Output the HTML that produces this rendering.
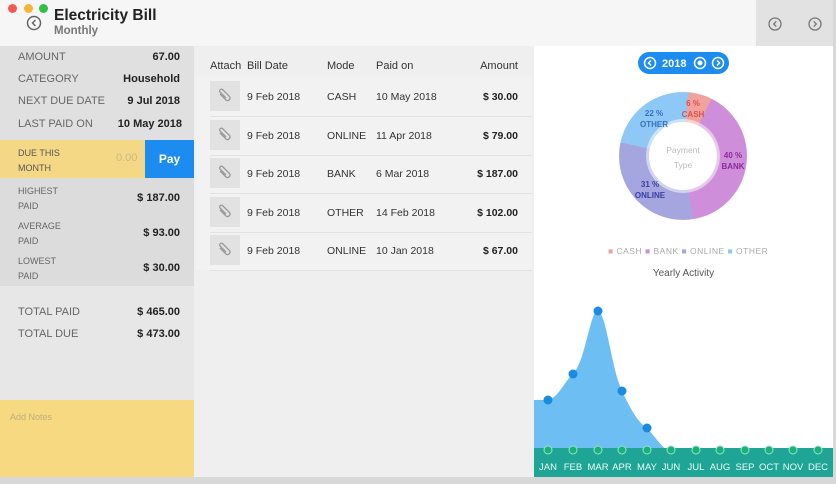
<!DOCTYPE html>
<html><head><meta charset="utf-8"><style>
*{margin:0;padding:0;box-sizing:border-box}
body{width:836px;height:484px;overflow:hidden;background:#d8d8d8;font-family:"Liberation Sans",sans-serif;position:relative}
.abs{position:absolute}
.lbl{font-size:11px;color:#666}
.val{font-size:11px;font-weight:bold;color:#222;text-align:right}
.th{font-size:11px;color:#333}
.td{font-size:10.5px;color:#333}
.clip{width:30px;height:30px;background:#e2e2e2}
</style></head><body>
<div class="abs" style="left:0;top:0;width:833px;height:46px;background:#f6f6f6"></div>
<div class="abs" style="left:756px;top:0;width:77px;height:46px;background:#e2e2e2"></div>
<div class="abs" style="left:8px;top:4px;width:9px;height:9px;border-radius:50%;background:#f25a50"></div>
<div class="abs" style="left:24px;top:4px;width:9px;height:9px;border-radius:50%;background:#f6b634"></div>
<div class="abs" style="left:39px;top:4px;width:9px;height:9px;border-radius:50%;background:#2fc144"></div>
<svg class="abs" style="left:26px;top:15px" width="16" height="16"><circle cx="8" cy="8" r="6.5" fill="none" stroke="#666" stroke-width="1.5"/><path d="M9.5 5 L6.5 8 L9.5 11" fill="none" stroke="#666" stroke-width="1.5"/></svg>
<div class="abs" style="left:54px;top:7px;font-size:15.5px;font-weight:bold;color:#222">Electricity Bill</div>
<div class="abs" style="left:54px;top:25px;font-size:11.5px;font-weight:bold;color:#777">Monthly</div>
<svg class="abs" style="left:767px;top:16px" width="16" height="16"><circle cx="8" cy="8" r="6" fill="none" stroke="#777" stroke-width="1.3"/><path d="M9.3 5.3 L6.7 8 L9.3 10.7" fill="none" stroke="#777" stroke-width="1.3"/></svg>
<svg class="abs" style="left:807px;top:16px" width="16" height="16"><circle cx="8" cy="8" r="6" fill="none" stroke="#777" stroke-width="1.3"/><path d="M6.7 5.3 L9.3 8 L6.7 10.7" fill="none" stroke="#777" stroke-width="1.3"/></svg>

<div class="abs" style="left:0;top:46px;width:194px;height:94px;background:#e0e0e0"></div>
<div class="abs lbl" style="left:18px;top:51px">AMOUNT</div><div class="abs val" style="left:90px;top:51px;width:90px">67.00</div>
<div class="abs lbl" style="left:18px;top:73px">CATEGORY</div><div class="abs val" style="left:90px;top:73px;width:90px">Household</div>
<div class="abs lbl" style="left:18px;top:95px">NEXT DUE DATE</div><div class="abs val" style="left:90px;top:95px;width:90px">9 Jul 2018</div>
<div class="abs lbl" style="left:18px;top:118px">LAST PAID ON</div><div class="abs val" style="left:90px;top:118px;width:92px">10 May 2018</div>
<div class="abs" style="left:0;top:140px;width:145px;height:38px;background:#f5d886"></div>
<div class="abs" style="left:18px;top:146px;font-size:9px;color:#555;line-height:15px">DUE THIS<br>MONTH</div>
<div class="abs" style="left:116px;top:152px;font-size:11px;color:#c8b88a">0.00</div>
<div class="abs" style="left:145px;top:140px;width:49px;height:38px;background:#1d8cf0;color:#fff;font-weight:bold;font-size:12px;text-align:center;line-height:38px">Pay</div>
<div class="abs" style="left:0;top:178px;width:194px;height:108px;background:#dcdcdc"></div>
<div class="abs" style="left:18px;top:184px;font-size:9px;color:#666;line-height:15px">HIGHEST<br>PAID</div><div class="abs val" style="left:90px;top:192px;width:90px">$ 187.00</div>
<div class="abs" style="left:18px;top:219px;font-size:9px;color:#666;line-height:15px">AVERAGE<br>PAID</div><div class="abs val" style="left:90px;top:227px;width:90px">$ 93.00</div>
<div class="abs" style="left:18px;top:254px;font-size:9px;color:#666;line-height:15px">LOWEST<br>PAID</div><div class="abs val" style="left:90px;top:262px;width:90px">$ 30.00</div>
<div class="abs" style="left:0;top:286px;width:194px;height:114px;background:#e7e7e7"></div>
<div class="abs lbl" style="left:18px;top:306px">TOTAL PAID</div><div class="abs val" style="left:90px;top:306px;width:90px">$ 465.00</div>
<div class="abs lbl" style="left:18px;top:328px">TOTAL DUE</div><div class="abs val" style="left:90px;top:328px;width:90px">$ 473.00</div>
<div class="abs" style="left:0;top:400px;width:194px;height:77px;background:#f6d981"></div>
<div class="abs" style="left:10px;top:412px;font-size:9px;color:#bfae7e">Add Notes</div>

<div class="abs" style="left:194px;top:46px;width:340px;height:431px;background:#efefef"></div>
<div class="abs th" style="left:210px;top:60px">Attach</div>
<div class="abs th" style="left:247px;top:60px">Bill Date</div>
<div class="abs th" style="left:327px;top:60px">Mode</div>
<div class="abs th" style="left:376px;top:60px">Paid on</div>
<div class="abs th" style="left:440px;top:60px;width:78px;text-align:right">Amount</div>
<div class="abs" style="left:196px;top:76px;width:336px;height:194px;background:#f2f2f2"></div>
<div id="rows"></div>
<script>
var r=[["CASH","10 May 2018","$ 30.00"],["ONLINE","11 Apr 2018","$ 79.00"],["BANK","6 Mar 2018","$ 187.00"],["OTHER","14 Feb 2018","$ 102.00"],["ONLINE","10 Jan 2018","$ 67.00"]];
var h="";r.forEach(function(x,i){var y=81+i*38.5;
h+='<div class="abs clip" style="left:210px;top:'+y+'px"></div><svg class="abs" style="left:217px;top:'+(y+7)+'px" width="16" height="16"><path d="M3 6 L9 12 a2.5 2.5 0 0 0 3.5-3.5 L5.5 1.5 a1.8 1.8 0 0 0-2.5 2.5 L9 10" fill="none" stroke="#999" stroke-width="1.3"/></svg>';
h+='<div class="abs td" style="left:247px;top:'+(y+10)+'px">9 Feb 2018</div><div class="abs td" style="left:327px;top:'+(y+10)+'px">'+x[0]+'</div><div class="abs td" style="left:376px;top:'+(y+10)+'px">'+x[1]+'</div><div class="abs td" style="left:440px;top:'+(y+10)+'px;width:78px;text-align:right;font-weight:bold;color:#222">'+x[2]+'</div><div class="abs" style="left:210px;top:'+(y+35)+'px;width:322px;height:1px;background:#e2e2e2"></div>';});
document.getElementById("rows").innerHTML=h;
</script>

<div class="abs" style="left:534px;top:46px;width:299px;height:431px;background:#fff"></div>
<div class="abs" style="left:638px;top:52px;width:91px;height:22px;border-radius:11px;background:#1d8cf0"></div>
<svg class="abs" style="left:638px;top:52px" width="91" height="22"><g fill="none" stroke="#fff" stroke-width="1.5"><circle cx="12" cy="11" r="5.5"/><path d="M13 8.5 L10.5 11 L13 13.5"/><circle cx="62" cy="11" r="5.5"/><circle cx="80" cy="11" r="5.5"/><path d="M79 8.5 L81.5 11 L79 13.5"/></g><circle cx="62" cy="11" r="2.5" fill="#fff"/><text x="24" y="15" font-family="Liberation Sans" font-size="11" font-weight="bold" fill="#fff">2018</text></svg>
<div class="abs" style="left:619px;top:92px;width:128px;height:128px;border-radius:50%;background:conic-gradient(from 5deg,#f1a29c 0 6%,#cf8ed9 6% 46%,#a5a6df 46% 77%,#8ec8f6 77% 100%)"></div>
<div class="abs" style="left:649px;top:122px;width:68px;height:68px;border-radius:50%;background:#fff;box-shadow:0 0 0 3px rgba(255,255,255,.5)"></div>
<div class="abs" style="left:649px;top:143px;width:68px;text-align:center;font-size:8.5px;color:#bbb;line-height:15px">Payment<br>Type</div>
<div class="abs" style="left:678px;top:98px;width:30px;text-align:center;font-size:8px;font-weight:bold;color:#d9534f;line-height:11px">6 %<br>CASH</div>
<div class="abs" style="left:718px;top:150px;width:30px;text-align:center;font-size:8px;font-weight:bold;color:#8a2b9a;line-height:11px">40 %<br>BANK</div>
<div class="abs" style="left:632px;top:179px;width:36px;text-align:center;font-size:8px;font-weight:bold;color:#3b3fa0;line-height:11px">31 %<br>ONLINE</div>
<div class="abs" style="left:636px;top:108px;width:36px;text-align:center;font-size:8px;font-weight:bold;color:#3a6fbf;line-height:11px">22 %<br>OTHER</div>
<div class="abs" style="left:608px;top:246px;font-size:8.5px;letter-spacing:0.5px;color:#aaa;white-space:nowrap"><span style="color:#f1a29c">■</span> CASH <span style="color:#cf8ed9">■</span> BANK <span style="color:#a5a6df">■</span> ONLINE <span style="color:#8ec8f6">■</span> OTHER</div>
<div class="abs" style="left:534px;top:268px;width:299px;text-align:center;font-size:10px;color:#555">Yearly Activity</div>
<svg class="abs" style="left:534px;top:290px" width="299" height="187">
<path d="M0 110 L14 110 C24 108 30 92 39 84 C52 70 56 20 64 21 C72 22 78 80 88 101 C98 122 104 132 113 138 C122 148 130 160 137 163 L0 163 Z" fill="#6dbef3"/>
<g fill="#1a8be0"><circle cx="14" cy="110" r="4.5"/><circle cx="39" cy="84" r="4.5"/><circle cx="64" cy="21" r="4.5"/><circle cx="88" cy="101" r="4.5"/><circle cx="113" cy="138" r="4.5"/></g>
<rect x="0" y="158" width="299" height="29" fill="#1fa596"/>
<g fill="#17b27a" stroke="#9be0c7" stroke-width="1"><circle cx="14" cy="160" r="4"/><circle cx="39" cy="160" r="4"/><circle cx="64" cy="160" r="4"/><circle cx="88" cy="160" r="4"/><circle cx="113" cy="160" r="4"/><circle cx="137" cy="160" r="4"/><circle cx="162" cy="160" r="4"/><circle cx="186" cy="160" r="4"/><circle cx="211" cy="160" r="4"/><circle cx="235" cy="160" r="4"/><circle cx="259" cy="160" r="4"/><circle cx="284" cy="160" r="4"/></g>
<g font-family="Liberation Sans" font-size="9.5" fill="#e8fbf6" text-anchor="middle"><text x="14" y="180">JAN</text><text x="39" y="180">FEB</text><text x="64" y="180">MAR</text><text x="88" y="180">APR</text><text x="113" y="180">MAY</text><text x="137" y="180">JUN</text><text x="162" y="180">JUL</text><text x="186" y="180">AUG</text><text x="211" y="180">SEP</text><text x="235" y="180">OCT</text><text x="259" y="180">NOV</text><text x="284" y="180">DEC</text></g>
</svg>
</body></html>
